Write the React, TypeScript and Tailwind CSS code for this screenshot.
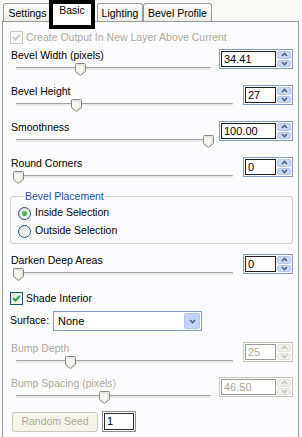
import React from "react";

const Thumb = ({ pos }: { pos: string }) => (
  <svg className={`absolute top-[1px] ${pos}`} width="11" height="13" viewBox="0 0 11 13">
    <path d="M1.5 0.5 H9.5 Q10.5 0.5 10.5 1.5 V8.5 L5.5 12.5 L0.5 8.5 V1.5 Q0.5 0.5 1.5 0.5Z" fill="#f6f6f2" stroke="#86877c" />
    <path d="M2 2 H9 V8 L5.5 11" fill="none" stroke="#d8d8cf" strokeWidth="1" />
  </svg>
);

const Slider = ({ pos }: { pos: string }) => (
  <div className="relative h-[16px]">
    <div className="absolute left-[6px] right-0 top-[5px] h-[3px] border-t border-[#a3a3a0] bg-[#e8e8e4] rounded-[1px]" />
    <Thumb pos={pos} />
  </div>
);

const Arrow = ({ up, disabled }: { up?: boolean; disabled?: boolean }) => (
  <svg width="7" height="5" viewBox="0 0 7 5">
    <path d={up ? "M1 4 L3.5 1.5 L6 4" : "M1 1 L3.5 3.5 L6 1"} fill="none" stroke={disabled ? "#c4c3bb" : "#4d6185"} strokeWidth="1.6" />
  </svg>
);

const Spin = ({ value, wide, disabled }: { value: string; wide?: boolean; disabled?: boolean }) => (
  <div
    className={`mt-[1px] flex h-[20px] shrink-0 self-start border p-[1px] bg-white ${wide ? "w-[74px]" : "w-[50px]"} ${
      disabled ? "border-[#c9c7ba]" : "border-[#7f9db9]"
    }`}
  >
    <div
      className={`flex flex-1 items-center border pl-[2px] text-[11px] leading-none ${
        disabled ? "border-[#9a9a94] text-[#aca899]" : "border-[#1e1e1e] text-black"
      }`}
    >
      {value}
    </div>
    <div className="ml-[1px] flex w-[14px] flex-col gap-[1px]">
      <div
        className={`flex flex-1 items-center justify-center rounded-[2px] border ${
          disabled ? "border-[#e2e1da] bg-[#f1f0ea]" : "border-[#b4c6ee] bg-[#c9d8fb]"
        }`}
      >
        <Arrow up disabled={disabled} />
      </div>
      <div
        className={`flex flex-1 items-center justify-center rounded-[2px] border ${
          disabled ? "border-[#e2e1da] bg-[#f1f0ea]" : "border-[#b4c6ee] bg-[#c9d8fb]"
        }`}
      >
        <Arrow disabled={disabled} />
      </div>
    </div>
  </div>
);

const Block = ({
  label,
  value,
  wide,
  pos,
  disabled,
  h,
}: {
  label: string;
  value: string;
  wide?: boolean;
  pos: string;
  disabled?: boolean;
  h: string;
}) => (
  <div className={`flex ${h}`}>
    <div className={`flex flex-1 flex-col ${wide ? "mr-[8px]" : "mr-[10px]"}`}>
      <div className={`h-[14px] leading-[14px] pl-[1px] ${disabled ? "text-[#aca899]" : "text-black"}`}>{label}</div>
      <Slider pos={pos} />
    </div>
    <Spin value={value} wide={wide} disabled={disabled} />
  </div>
);

const Check = ({ disabled }: { disabled?: boolean }) => (
  <div
    className={`flex h-[13px] w-[13px] items-center justify-center border ${
      disabled ? "border-[#cac8bb] bg-white" : "border-[#1c5180] bg-gradient-to-br from-[#dcdcd7] to-white"
    }`}
  >
    <svg width="9" height="9" viewBox="0 0 9 9">
      <path d="M1.2 4.2 L3.5 6.6 L7.8 1.8" fill="none" stroke={disabled ? "#cac8bb" : "#21a121"} strokeWidth="1.8" />
    </svg>
  </div>
);

const Radio = ({ checked }: { checked?: boolean }) => (
  <div className="flex h-[13px] w-[13px] items-center justify-center rounded-full border border-[#1c5180] bg-gradient-to-br from-[#dcdcd7] to-white">
    {checked && <div className="h-[5px] w-[5px] rounded-full bg-gradient-to-br from-[#55d051] to-[#21a121]" />}
  </div>
);

const Tab = ({ label, w }: { label: string; w: string }) => (
  <div
    className={`h-[18px] ${w} rounded-t-[3px] border border-b-0 border-[#919b9c] bg-gradient-to-b from-white to-[#ecebe5] pt-[2px] text-center leading-[14px] text-black`}
  >
    {label}
  </div>
);

export default function App() {
  return (
    <div className="relative flex h-[437px] w-[302px] flex-col overflow-hidden bg-[#f9f9f6] font-['Liberation_Sans',Arial,sans-serif] text-[10.5px] text-black">
      {/* tabs */}
      <div className="flex h-[21px] items-end pl-[3px]">
        <Tab label="Settings" w="w-[49px]" />
        <div className="h-[21px] w-[45px] bg-white" />
        <Tab label="Lighting" w="w-[46px]" />
        <Tab label="Bevel Profile" w="w-[69px]" />
      </div>
      <div className="absolute left-[49px] top-0 z-10 flex h-[29px] w-[46px] justify-center border-4 border-black bg-white pt-[1px] leading-[10px]">
        Basic
      </div>

      {/* panel */}
      <div className="ml-[2px] flex w-[297px] flex-1 flex-col border border-b-0 border-[#919b9c] bg-[#fcfcfe] pl-[7px] pr-[5px]">
        <div className="mt-[9px] flex h-[13px] items-center gap-[3px]">
          <Check disabled />
          <span className="leading-[13px] text-[#aca899]">Create Output In New Layer Above Current</span>
        </div>

        <div className="mt-[4px]" />
        <Block label="Bevel Width (pixels)" value="34.41" wide pos="left-[65px]" h="h-[36px]" />
        <Block label="Bevel Height" value="27" pos="left-[61px]" h="h-[36px]" />
        <Block label="Smoothness" value="100.00" wide pos="left-[193px]" h="h-[36px]" />
        <Block label="Round Corners" value="0" pos="left-[3px]" h="h-[33px]" />

        <fieldset className="h-[55px] rounded-[3px] border border-[#d0d0bf] pl-[7px] pt-[1px]">
          <legend className="ml-[6px] px-[1px] leading-[14px] text-[#1a4ea8]">Bevel Placement</legend>
          <div className="flex h-[18px] items-center gap-[4px]">
            <Radio checked />
            <span>Inside Selection</span>
          </div>
          <div className="flex h-[18px] items-center gap-[4px]">
            <Radio />
            <span>Outside Selection</span>
          </div>
        </fieldset>

        <div className="mt-[9px]" />
        <Block label="Darken Deep Areas" value="0" pos="left-[3px]" h="h-[36px]" />

        <div className="mt-[3px] flex h-[13px] items-center gap-[3px]">
          <Check />
          <span className="leading-[13px]">Shade Interior</span>
        </div>

        <div className="mt-[6px] flex h-[20px] items-center">
          <span className="w-[43px]">Surface:</span>
          <div className="flex h-[20px] w-[149px] items-center border border-[#7f9db9] bg-white">
            <span className="pl-[4px] text-[11px]">None</span>
            <div className="ml-auto mr-[1px] flex h-[16px] w-[16px] items-center justify-center rounded-[2px] border border-[#b4c6ee] bg-[#c1d3fb]">
              <Arrow />
            </div>
          </div>
        </div>

        <div className="mt-[10px]" />
        <Block label="Bump Depth" value="25" pos="left-[55px]" disabled h="h-[35px]" />
        <Block label="Bump Spacing (pixels)" value="46.50" wide pos="left-[89px]" disabled h="h-[33px]" />

        <div className="ml-[2px] mt-[2px] flex h-[21px] items-center gap-[4px]">
          <div className="flex h-[20px] w-[86px] items-center justify-center rounded-[3px] border border-[#c9c7ba] bg-[#f5f4ea] text-[#aca899]">
            Random Seed
          </div>
          <div className="flex h-[21px] w-[34px] border border-[#8c8c8c] p-[1px] bg-white">
            <div className="flex flex-1 items-center border border-[#2a2a2a] pl-[2px] text-[11px]">1</div>
          </div>
        </div>
      </div>
    </div>
  );
}
